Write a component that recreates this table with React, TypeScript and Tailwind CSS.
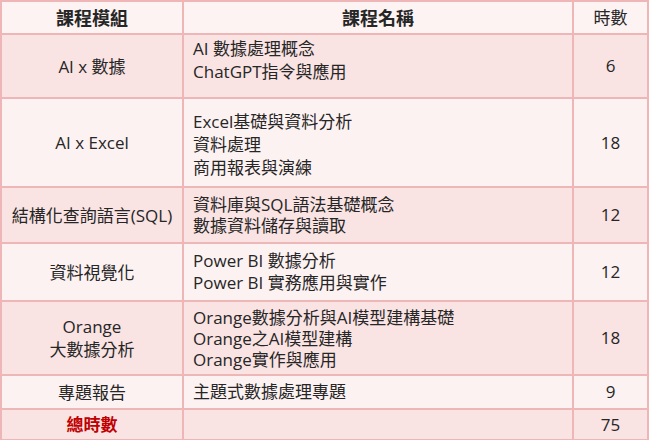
const rows = [
  { mod: ["AI x 數據"], items: ["AI 數據處理概念", "ChatGPT指令與應用"], hours: "6", h: "h-[64px]", lh: "leading-[23px] pb-[12px]" },
  { mod: ["AI x Excel"], items: ["Excel基礎與資料分析", "資料處理", "商用報表與演練"], hours: "18", h: "h-[89px]", lh: "leading-[23px] pt-[4px]" },
  { mod: ["結構化查詢語言(SQL)"], items: ["資料庫與SQL語法基礎概念", "數據資料儲存與讀取"], hours: "12", h: "h-[56px]", lh: "leading-[21px]" },
  { mod: ["資料視覺化"], items: ["Power BI 數據分析", "Power BI 實務應用與實作"], hours: "12", h: "h-[58px]", lh: "leading-[22px]" },
  { mod: ["Orange", "大數據分析"], items: ["Orange數據分析與AI模型建構基礎", "Orange之AI模型建構", "Orange實作與應用"], hours: "18", h: "h-[74px]", lh: "leading-[21px]" },
  { mod: ["專題報告"], items: ["主題式數據處理專題"], hours: "9", h: "h-[34px]", lh: "leading-[22px]" },
];

export default function App() {
  return (
    <div className="w-[650px] h-[440px] bg-white text-[#262626] font-['Open_Sans','Noto_Sans_CJK_TC',sans-serif] text-[17px] leading-[22px]">
      <table className="w-[649px] border-collapse border-2 border-[#eeb6b6] table-fixed">
        <colgroup>
          <col className="w-[182px]" />
          <col className="w-[390px]" />
          <col />
        </colgroup>
        <thead>
          <tr className="h-[33px] bg-[#fdf3f3] font-bold text-[18px]">
            <th className="border-2 border-[#eeb6b6] text-center">課程模組</th>
            <th className="border-2 border-[#eeb6b6] text-center">課程名稱</th>
            <th className="border-2 border-[#eeb6b6] text-center font-normal text-[17px]">時數</th>
          </tr>
        </thead>
        <tbody>
          {rows.map((r, i) => (
            <tr key={i} className={`${r.h} ${i % 2 === 0 ? "bg-[#f9e3e3]" : "bg-[#fdf2f2]"}`}>
              <td className="border-2 border-[#eeb6b6] text-center leading-[23px]">
                {r.mod.map((m) => (
                  <div key={m}>{m}</div>
                ))}
              </td>
              <td className={`border-2 border-[#eeb6b6] pl-[9px] ${r.lh}`}>
                {r.items.map((t) => (
                  <div key={t}>{t}</div>
                ))}
              </td>
              <td className="border-2 border-[#eeb6b6] text-center">{r.hours}</td>
            </tr>
          ))}
          <tr className="h-[31px] bg-[#f9e3e3]">
            <td className="border-2 border-[#eeb6b6] text-center font-bold text-[#c00000]">總時數</td>
            <td className="border-2 border-[#eeb6b6]"></td>
            <td className="border-2 border-[#eeb6b6] text-center">75</td>
          </tr>
        </tbody>
      </table>
    </div>
  );
}
